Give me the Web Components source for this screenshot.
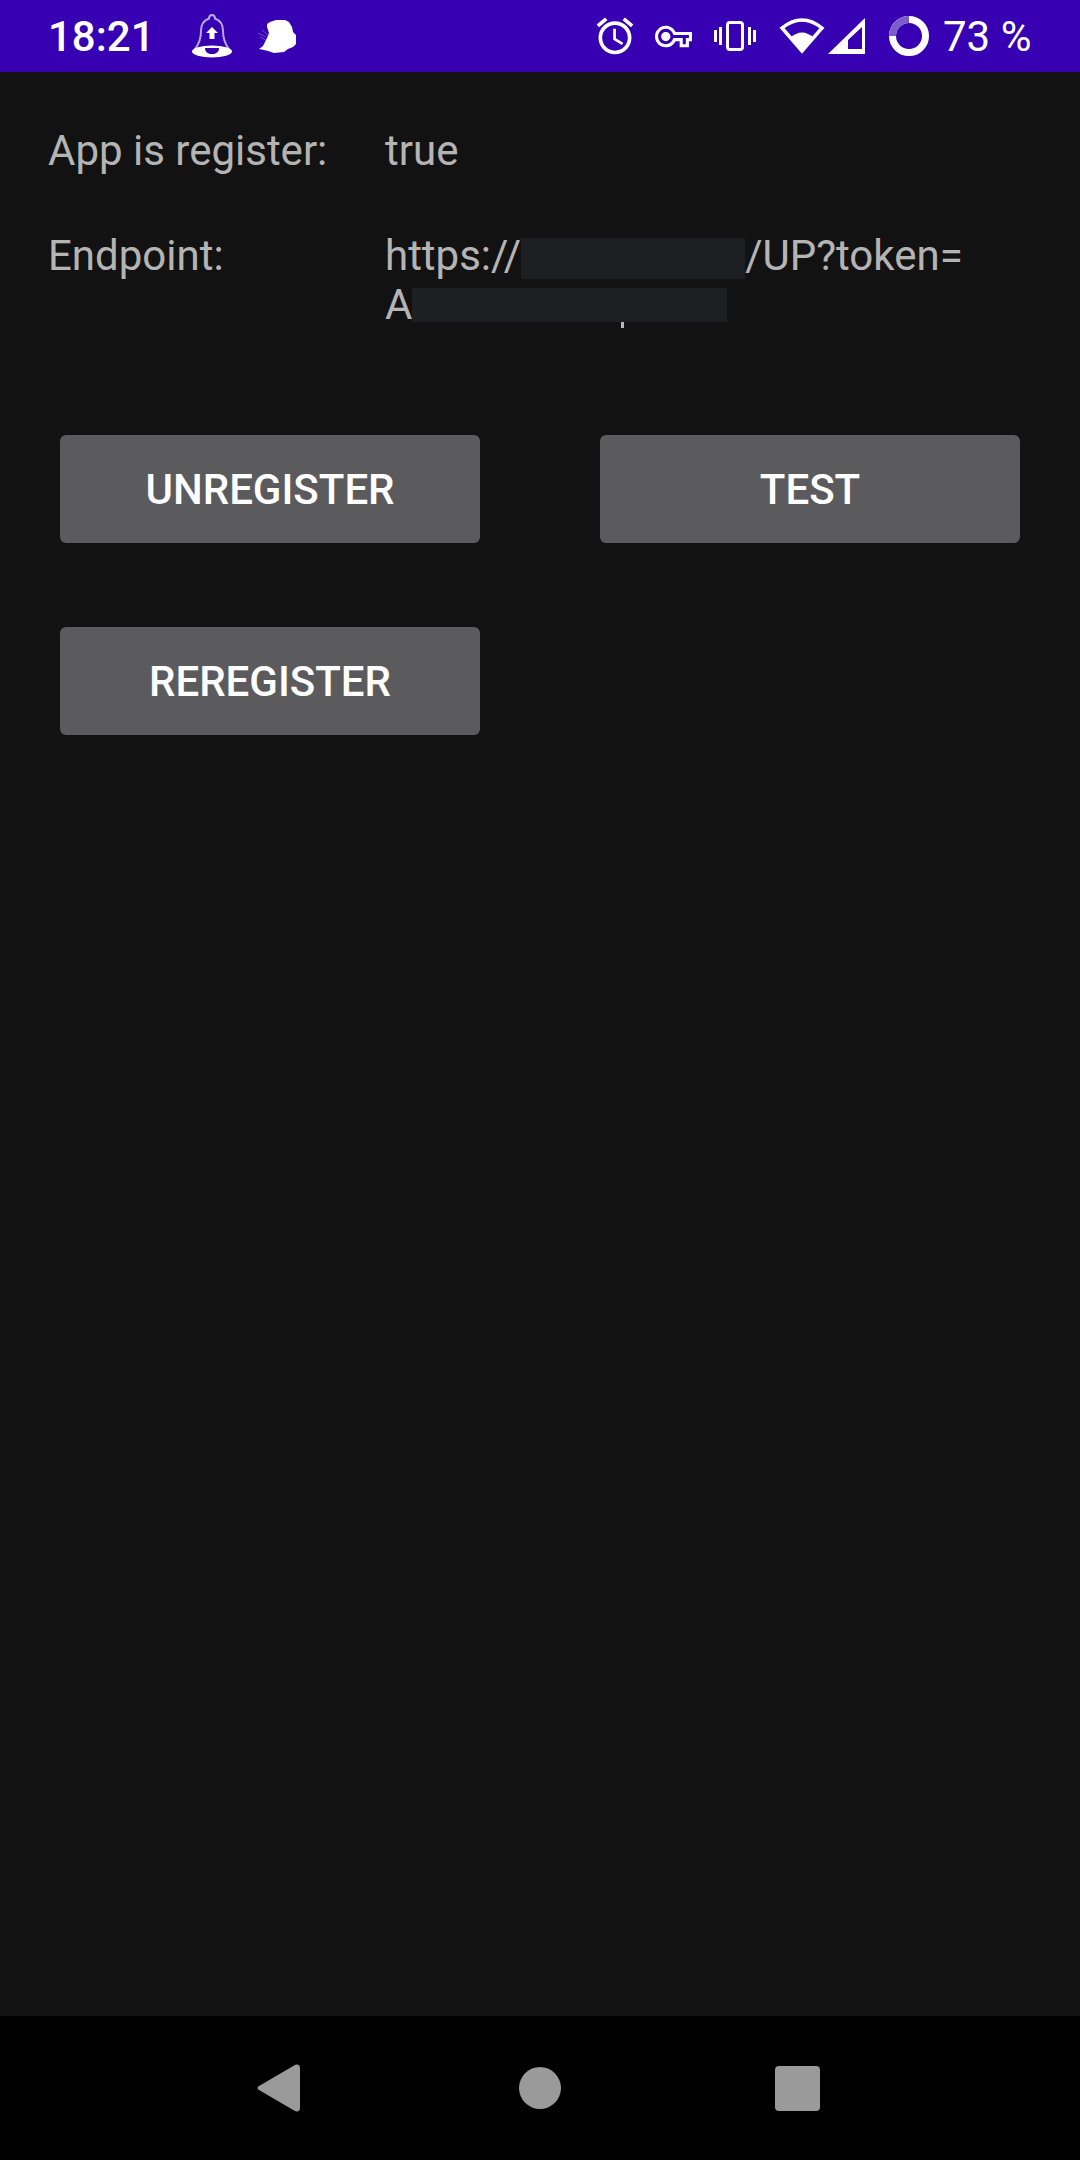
<!DOCTYPE html>
<html><head><meta charset="utf-8"><style>
html,body{margin:0;padding:0;background:#121212}
body{width:1080px;height:2160px;display:flex;flex-direction:column;font-family:Roboto,sans-serif;overflow:hidden}
</style></head><body>
<status-bar></status-bar>
<app-main>
  <info-row label="App is register:" style="--top:54px">true</info-row>
  <info-row label="Endpoint:" style="--top:56px">https://<redact-box style="--w:224px;--h:41px;--y:-9px"></redact-box>/UP?token=<br>A<redact-box style="--w:315px;--h:34px;--y:-3px" tick></redact-box></info-row>
  <button-grid>
    <app-button>UNREGISTER</app-button>
    <app-button>TEST</app-button>
    <app-button>REREGISTER</app-button>
  </button-grid>
</app-main>
<nav-bar></nav-bar>
<script>
function def(name,html,init){customElements.define(name,class extends HTMLElement{
  constructor(){super();const s=this.attachShadow({mode:'open'});s.innerHTML=html;}
  connectedCallback(){if(init)init(this)}
});}
def('status-bar',`<style>
:host{display:flex;align-items:center;height:72px;background:#3700b3;color:#fff;flex:none;box-sizing:border-box;padding-left:48px}
span{font:500 42px/1 Roboto,sans-serif;white-space:nowrap;padding-top:2px}
svg{display:block;flex:none;fill:#fff}
.t{width:143px}.b{font-weight:400;margin-left:14px}
</style>
<span class="t">18:21</span>
<svg width="42" height="46" viewBox="0 0 42 46" style="margin-top:-1px">
<path d="M21 2c-2 0-3 1.500-3 3.500C12 7.500 10 12 10 18c0 8-2 13-6 18h34c-4-5-6-10-6-18 0-6-2-10.500-8-12.500C24 3.500 23 2 21 2z" fill="none" stroke="#fff" stroke-opacity=".65" stroke-width="2"/>
<path d="M21 14l6 6h-3.500v6h-5v-6H15z"/>
<ellipse cx="21" cy="38.500" rx="20" ry="6"/>
<path d="M14 35h14c0 4-3 6-7 6s-7-2-7-6z" fill="#3700b3"/>
</svg>
<svg width="39" height="34" viewBox="258 19 39 34" style="margin-left:25px">
<path d="M267 24L270 22 276 20 285 20 289 22 292 27 293 32 296 35 296 44 293 47 288 49 284 52 274 53 268 51 264 50 259 49 263 46 265 42 267 38 269 33 267 27z"/>
<path d="M258 33l8 4M260 37l6 3M262 30l6 5" stroke="#fff" stroke-opacity=".3" fill="none"/>
</svg>
<svg width="44" height="44" viewBox="0 0 24 24" style="margin-left:296px"><path d="M22 5.720l-4.600-3.860-1.290 1.530 4.600 3.860L22 5.720zM7.880 3.390L6.600 1.860 2 5.710l1.290 1.530 4.590-3.850zM12.500 8H11v6l4.750 2.850.75-1.230-4-2.370V8zM12 4c-4.970 0-9 4.030-9 9s4.030 9 9 9 9-4.030 9-9-4.030-9-9-9zm0 16c-3.870 0-7-3.130-7-7s3.130-7 7-7 7 3.130 7 7-3.130 7-7 7z"/></svg>
<svg width="37" height="37" viewBox="0 0 24 24" style="margin-left:18px"><path fill-rule="evenodd" d="M22 19h-6v-4h-2.680c-1.140 2.420-3.600 4-6.320 4-3.860 0-7-3.140-7-7s3.140-7 7-7c2.720 0 5.170 1.580 6.320 4H24v6h-2v4zm-4-2h2v-4h2v-2H11.940l-.23-.67C11.010 8.340 9.110 7 7 7c-2.760 0-5 2.240-5 5s2.240 5 5 5c2.110 0 4.010-1.340 4.710-3.330l.23-.67H18v4zM7 15c-1.650 0-3-1.350-3-3s1.350-3 3-3 3 1.350 3 3-1.350 3-3 3z"/></svg>
<svg width="42" height="30" viewBox="0 0 42 30" style="margin-left:22px"><rect x="13.500" y="1.500" width="15" height="27" rx="2.500" fill="none" stroke="#fff" stroke-width="3"/><rect x="0" y="9" width="3" height="12"/><rect x="5" y="6" width="3" height="18"/><rect x="34" y="6" width="3" height="18"/><rect x="39" y="9" width="3" height="12"/></svg>
<svg width="46" height="38" viewBox="0 0 46 38" style="margin-left:23px"><path d="M3 11Q23-5 43 11L23 34z" fill="none" stroke="#fff" stroke-width="3.500" stroke-linejoin="miter"/><path d="M11 21Q23 10 35 21L23 36z"/></svg>
<svg width="38" height="36" viewBox="0 0 38 36" style="margin-left:3px"><path fill-rule="evenodd" d="M0 36L37 0v36zM20 22v9h14V9z"/></svg>
<svg width="40" height="40" viewBox="0 0 40 40" style="margin-left:23px"><circle cx="20" cy="20" r="16.500" fill="none" stroke="#fff" stroke-width="7"/><path d="M3.500 20A16.500 16.500 0 0 1 20 3.500" fill="none" stroke="#7b5cc9" stroke-width="7"/></svg>
<span class="b">73 %</span>`);
def('info-row',`<style>
:host{display:grid;grid-template-columns:337px 1fr;padding:var(--top) 48px 0;font:400 42px/49px Roboto,sans-serif;color:rgba(255,255,255,.7)}
</style><div id="l"></div><div><slot></slot></div>`,el=>{el.shadowRoot.getElementById('l').textContent=el.getAttribute('label')});
def('redact-box',`<style>
:host{display:inline-block;position:relative;width:var(--w);height:var(--h);background:#1e1f22;vertical-align:var(--y)}
i{display:none;position:absolute;left:209px;bottom:-6px;width:3px;height:6px;background:#b8b8b8}
:host([tick]) i{display:block}
</style><i></i>`);
def('button-grid',`<style>
:host{display:grid;grid-template-columns:420px 420px;column-gap:120px;row-gap:84px;padding:106px 60px 0}
</style><slot></slot>`);
def('app-button',`<style>
:host{display:flex;align-items:center;justify-content:center;box-sizing:border-box;padding-top:2px;height:108px;background:#5b5b5d;border-radius:6px;color:#fff;font:500 42px/1 Roboto,sans-serif}
</style><slot></slot>`);
def('nav-bar',`<style>
:host{display:flex;align-items:center;height:144px;background:#000;flex:none;padding-left:257px;box-sizing:border-box}
svg{display:block;fill:#9a9a9a;flex:none}
</style>
<svg width="44" height="48" viewBox="0 0 44 48"><path d="M2 22L38 1c2-1 5-.5 5 3v40c0 3.500-3 4-5 3L2 26c-2-1-2-3 0-4z"/></svg>
<svg width="42" height="42" viewBox="0 0 42 42" style="margin-left:218px"><circle cx="21" cy="21" r="21"/></svg>
<svg width="45" height="45" viewBox="0 0 45 45" style="margin-left:214px"><rect width="45" height="45" rx="4"/></svg>`);
def('app-main',`<style>:host{display:block;flex:1}</style><slot></slot>`);
</script>
</body></html>
